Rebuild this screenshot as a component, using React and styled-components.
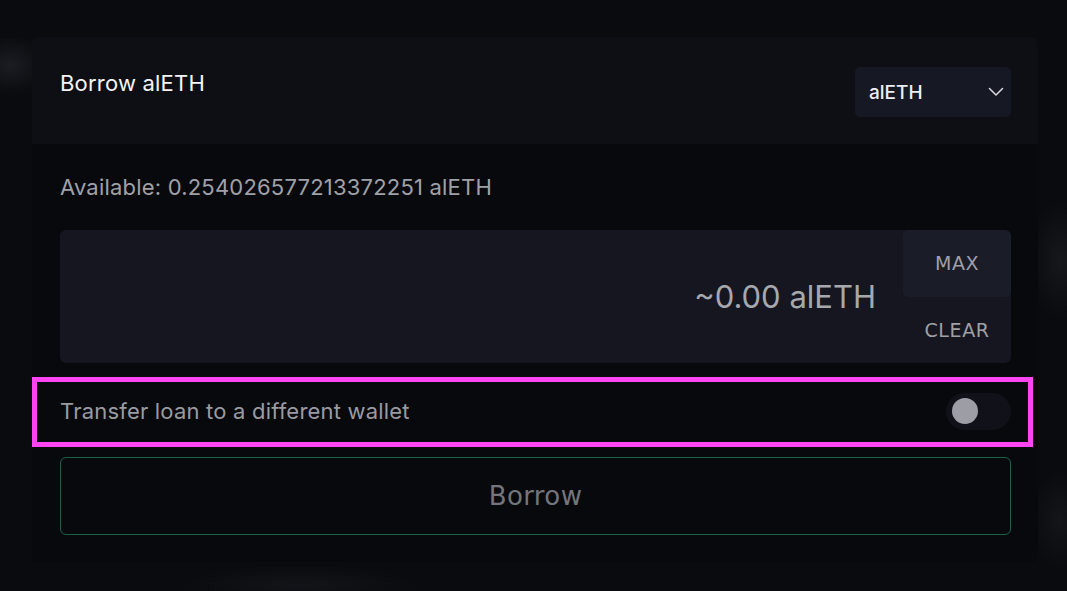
import React, { useState } from "react";
import styled, { createGlobalStyle } from "styled-components";

const GlobalStyle = createGlobalStyle`
  html, body {
    margin: 0;
    padding: 0;
  }
  body {
    width: 1067px;
    height: 591px;
    overflow: hidden;
    background-color: #0a0b0f;
    background-image:
      radial-gradient(ellipse 40px 30px at 10px 65px, rgba(60, 62, 70, 0.35), transparent),
      radial-gradient(ellipse 30px 60px at 1060px 260px, rgba(50, 52, 58, 0.3), transparent),
      radial-gradient(ellipse 30px 50px at 1060px 520px, rgba(50, 52, 58, 0.25), transparent),
      radial-gradient(ellipse 120px 20px at 300px 585px, rgba(40, 42, 48, 0.3), transparent);
    font-family: Inter, "Liberation Sans", sans-serif;
  }
`;

const Page = styled.div`
  padding: 37px 29px 29px 32px;
`;

const Card = styled.section`
  width: 1006px;
  background: #08090d;
  border-radius: 6px;
  overflow: hidden;
`;

const CardHeader = styled.header`
  display: flex;
  justify-content: space-between;
  align-items: flex-start;
  height: 107px;
  box-sizing: border-box;
  padding: 30px 27px 0 28px;
  background: #0e0f15;
`;

const Title = styled.h2`
  margin: 0;
  font-size: 22px;
  line-height: 32px;
  font-weight: 400;
  letter-spacing: 0.2px;
  color: #f4f4f6;
`;

const Select = styled.button`
  display: flex;
  align-items: center;
  justify-content: space-between;
  width: 156px;
  height: 50px;
  box-sizing: border-box;
  padding: 0 7px 0 14px;
  border: none;
  border-radius: 5px;
  background: #161823;
  color: #eceef2;
  font-family: Inter, "Liberation Sans", sans-serif;
  font-size: 19px;
  font-weight: 500;
`;

const CardBody = styled.div`
  display: flex;
  flex-direction: column;
  padding: 30px 27px 27px 28px;
`;

const Available = styled.p`
  margin: 0;
  font-size: 22px;
  line-height: 26px;
  letter-spacing: 0.2px;
  color: #a0a1a8;
`;

const InputBox = styled.div`
  display: flex;
  margin-top: 30px;
  height: 133px;
  background: #151620;
  border-radius: 6px;
  overflow: hidden;
`;

const Amount = styled.div`
  flex: 1;
  display: flex;
  align-items: center;
  justify-content: flex-end;
  padding-right: 27px;
  font-size: 31px;
  color: #a7a8ae;
`;

const SideButtons = styled.div`
  display: flex;
  flex-direction: column;
  width: 108px;
`;

const SideButton = styled.button`
  flex: 1;
  border: none;
  border-radius: 5px;
  background: ${(p) => (p.$filled ? "#1a1c27" : "transparent")};
  color: #9fa0a6;
  font-family: "DejaVu Sans", Lato, sans-serif;
  font-size: 19px;
  letter-spacing: 0.6px;
`;

const ToggleRow = styled.div`
  position: relative;
  display: flex;
  align-items: center;
  justify-content: space-between;
  height: 60px;
  margin-top: 18px;

  &::after {
    content: "";
    position: absolute;
    top: -4px;
    bottom: -6px;
    left: -28px;
    right: -22px;
    border: 5px solid #ff44f2;
    pointer-events: none;
  }
`;

const ToggleLabel = styled.span`
  font-size: 22px;
  letter-spacing: 0.2px;
  color: #9a9ba2;
`;

const Switch = styled.button`
  display: flex;
  align-items: center;
  width: 65px;
  height: 37px;
  padding: 0 6px;
  border: none;
  border-radius: 19px;
  background: #111219;
`;

const Knob = styled.span`
  width: 26px;
  height: 26px;
  border-radius: 50%;
  background: #9c9da5;
`;

const BorrowButton = styled.button`
  margin-top: 16px;
  height: 78px;
  border: 1.5px solid #1c5f47;
  border-radius: 6px;
  background: transparent;
  color: #74757a;
  font-family: "DejaVu Sans", Lato, sans-serif;
  font-size: 26px;
  letter-spacing: 0.4px;
`;

const Chevron = () => (
  <svg width="16" height="10" viewBox="0 0 16 10" fill="none">
    <path d="M1.5 1.5 L8 8 L14.5 1.5" stroke="#d4d5da" strokeWidth="1.6" strokeLinecap="round" strokeLinejoin="round" />
  </svg>
);

function App() {
  const [transfer] = useState(false);

  return (
    <>
      <GlobalStyle />
      <Page>
        <Card>
          <CardHeader>
            <Title>Borrow alETH</Title>
            <Select>
              alETH
              <Chevron />
            </Select>
          </CardHeader>
          <CardBody>
            <Available>Available: 0.254026577213372251 alETH</Available>
            <InputBox>
              <Amount>~0.00 alETH</Amount>
              <SideButtons>
                <SideButton $filled>MAX</SideButton>
                <SideButton>CLEAR</SideButton>
              </SideButtons>
            </InputBox>
            <ToggleRow>
              <ToggleLabel>Transfer loan to a different wallet</ToggleLabel>
              <Switch aria-pressed={transfer}>
                <Knob />
              </Switch>
            </ToggleRow>
            <BorrowButton>Borrow</BorrowButton>
          </CardBody>
        </Card>
      </Page>
    </>
  );
}

export default App;
